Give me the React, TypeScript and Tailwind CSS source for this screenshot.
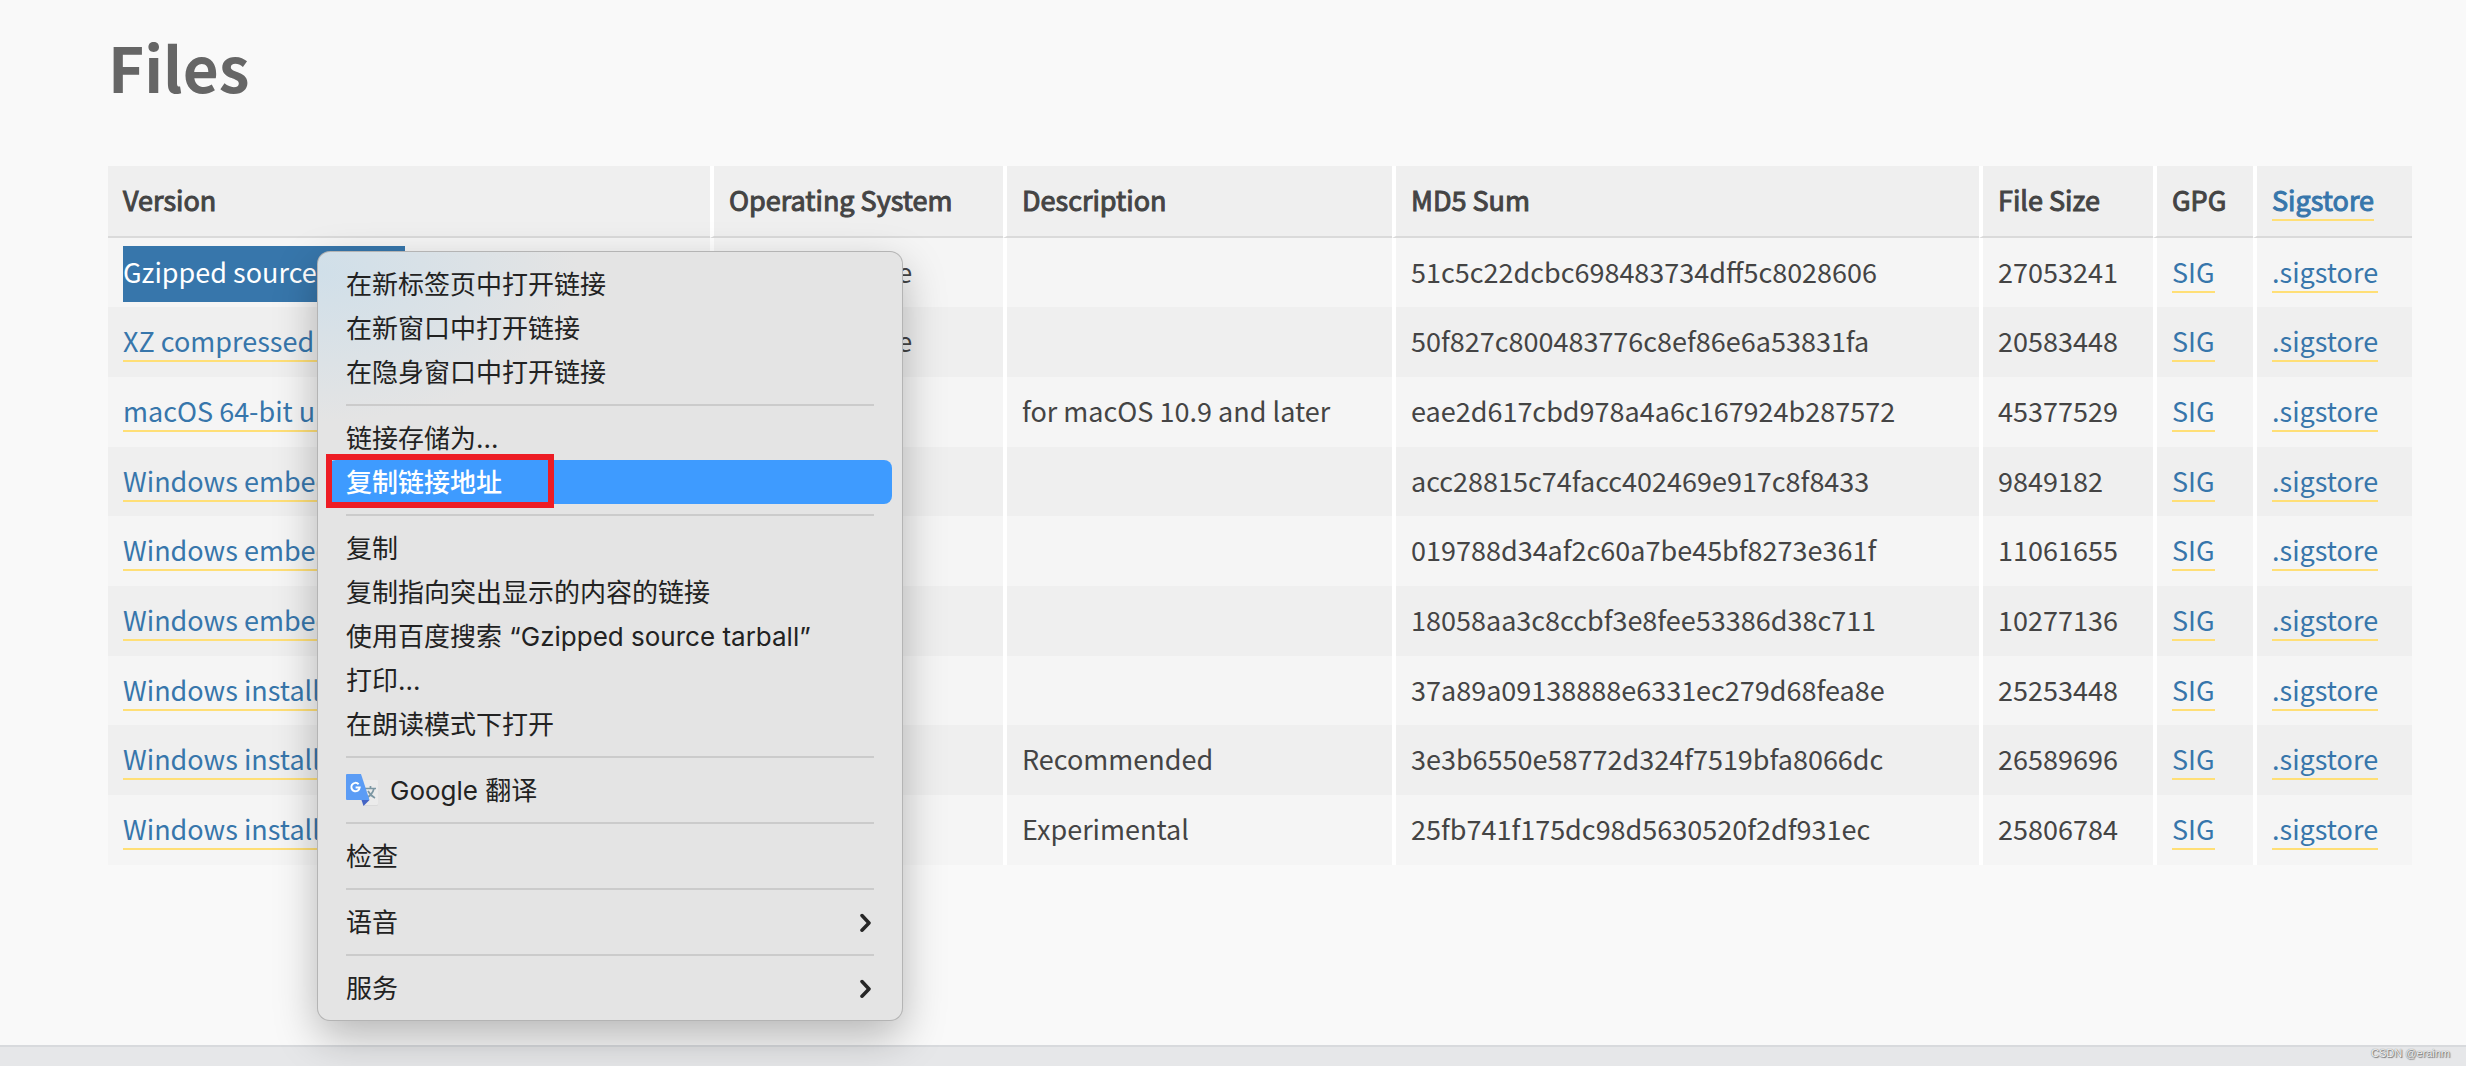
import { Fragment, type ReactNode } from "react";

type FileRow = {
  name: string;
  os: string;
  description: string;
  md5: string;
  size: string;
  selected?: boolean;
};

const files: FileRow[] = [
  { name: "Gzipped source tarball", os: "Source release", description: "", md5: "51c5c22dcbc698483734dff5c8028606", size: "27053241", selected: true },
  { name: "XZ compressed source tarball", os: "Source release", description: "", md5: "50f827c800483776c8ef86e6a53831fa", size: "20583448" },
  { name: "macOS 64-bit universal2 installer", os: "macOS", description: "for macOS 10.9 and later", md5: "eae2d617cbd978a4a6c167924b287572", size: "45377529" },
  { name: "Windows embeddable package (32-bit)", os: "Windows", description: "", md5: "acc28815c74facc402469e917c8f8433", size: "9849182" },
  { name: "Windows embeddable package (64-bit)", os: "Windows", description: "", md5: "019788d34af2c60a7be45bf8273e361f", size: "11061655" },
  { name: "Windows embeddable package (ARM64)", os: "Windows", description: "", md5: "18058aa3c8ccbf3e8fee53386d38c711", size: "10277136" },
  { name: "Windows installer (32-bit)", os: "Windows", description: "", md5: "37a89a09138888e6331ec279d68fea8e", size: "25253448" },
  { name: "Windows installer (64-bit)", os: "Windows", description: "Recommended", md5: "3e3b6550e58772d324f7519bfa8066dc", size: "26589696" },
  { name: "Windows installer (ARM64)", os: "Windows", description: "Experimental", md5: "25fb741f175dc98d5630520f2df931ec", size: "25806784" },
];

type Item = { label: string; icon?: boolean; active?: boolean; submenu?: boolean };

const menuGroups: Item[][] = [
  [{ label: "在新标签页中打开链接" }, { label: "在新窗口中打开链接" }, { label: "在隐身窗口中打开链接" }],
  [{ label: "链接存储为..." }, { label: "复制链接地址", active: true }],
  [
    { label: "复制" },
    { label: "复制指向突出显示的内容的链接" },
    { label: "使用百度搜索 “Gzipped source tarball”" },
    { label: "打印..." },
    { label: "在朗读模式下打开" },
  ],
  [{ label: "Google 翻译", icon: true }],
  [{ label: "检查" }],
  [{ label: "语音", submenu: true }],
  [{ label: "服务", submenu: true }],
];

function FileLink({ children, selected = false }: { children: ReactNode; selected?: boolean }) {
  return (
    <a
      href="#"
      className={
        selected
          ? "bg-[#3776ab] pt-[6px] pb-[11px] text-white"
          : "border-b-2 border-[#ffdf76] text-[#3776ab]"
      }
    >
      {children}
    </a>
  );
}

function FilesTable() {
  const th = "border-b-2 border-[#dadada] px-[15px] pt-[14px] align-top font-normal [-webkit-text-stroke:1px_currentColor]";
  const td = "px-[15px] pt-[14px] align-top";
  const divider = " border-l-4 border-l-white";
  return (
    <table className="w-full table-fixed border-separate border-spacing-0 text-left text-[27px] leading-10 whitespace-nowrap text-[#444]">
      <colgroup>
        <col />
        <col className="w-[293px]" />
        <col className="w-[389px]" />
        <col className="w-[587px]" />
        <col className="w-[174px]" />
        <col className="w-[100px]" />
        <col className="w-[159px]" />
      </colgroup>
      <thead>
        <tr className="h-[72px] bg-[#efefef]">
          <th className={th}>Version</th>
          <th className={th + divider}>Operating System</th>
          <th className={th + divider}>Description</th>
          <th className={th + divider}>MD5 Sum</th>
          <th className={th + divider}>File Size</th>
          <th className={th + divider}>GPG</th>
          <th className={th + divider}>
            <FileLink>Sigstore</FileLink>
          </th>
        </tr>
      </thead>
      <tbody>
        {files.map((f) => (
          <tr key={f.md5} className="h-[70px] bg-[#f5f5f5] even:bg-[#efefef] nth-[3n+1]:h-[69px]">
            <td className={td}>
              <FileLink selected={f.selected}>{f.name}</FileLink>
            </td>
            <td className={td + divider}>{f.os}</td>
            <td className={td + divider}>{f.description}</td>
            <td className={td + divider}>{f.md5}</td>
            <td className={td + divider}>{f.size}</td>
            <td className={td + divider}>
              <FileLink>SIG</FileLink>
            </td>
            <td className={td + divider}>
              <FileLink>.sigstore</FileLink>
            </td>
          </tr>
        ))}
      </tbody>
    </table>
  );
}

function TranslateIcon() {
  return (
    <svg viewBox="0 0 32 32" className="mr-3 size-8" aria-hidden="true">
      <path d="M14 6h17a1 1 0 0 1 1 1v23a1 1 0 0 1-1 1H17z" fill="#ebebeb" />
      <path d="M17 31h14a1 1 0 0 0 1-1v.6a1 1 0 0 1-1 1H17z" fill="#cfcfcf" />
      <path d="M19 14.5h11M24.5 12v2.5M28 14.5c-1 4-4 7.500-7.500 9.500M22 17c1.500 3 4 5.500 7 7" fill="none" stroke="#7c97a3" strokeWidth="1.700" />
      <path d="M15.500 26h8l-6 6z" fill="#4464c4" />
      <path d="M1 0h14l8.500 26H1a1 1 0 0 1-1-1V1a1 1 0 0 1 1-1z" fill="#5b9cf5" />
      <path d="M12.600 10.200a4.200 4.200 0 1 0 1.100 3.300H9.600" fill="none" stroke="#fff" strokeWidth="2" />
    </svg>
  );
}

function Chevron() {
  return (
    <svg viewBox="0 0 14 20" className="ml-auto h-5 w-[14px]" fill="none" stroke="#262626" strokeWidth="3.500" strokeLinecap="round" strokeLinejoin="round" aria-hidden="true">
      <path d="M2 3.500l7 7.500L2 18.200" />
    </svg>
  );
}

function ContextMenu() {
  return (
    <div
      role="menu"
      className="absolute top-[252px] left-[318px] w-[584px] rounded-[12px] bg-[#e4e4e4] bg-[radial-gradient(ellipse_260px_150px_at_0_20px,#d0dfe9,#e4e4e4)] p-[10px] text-[26px] text-[#222] shadow-[0_0_0_1px_#b4b4b4,0_16px_44px_rgba(0,0,0,0.28)]"
    >
      {menuGroups.map((group, i) => (
        <Fragment key={i}>
          {i > 0 && <hr className="mx-[18px] my-[10px] border-0 border-t-2 border-[#cbcbcb]" />}
          {group.map((item) => (
            <button
              key={item.label}
              type="button"
              role="menuitem"
              className={
                item.active
                  ? "relative flex h-11 w-full items-center rounded-[8px] bg-[#3e9bff] px-[18px] font-medium text-white"
                  : "flex h-11 w-full items-center px-[18px]"
              }
            >
              {item.icon && <TranslateIcon />}
              {item.label}
              {item.submenu && <Chevron />}
              {item.active && <span className="absolute -top-[6px] -left-[2px] h-[54px] w-[228px] border-6 border-[#ed1c24]" />}
            </button>
          ))}
        </Fragment>
      ))}
    </div>
  );
}

export default function App() {
  return (
    <div className="relative flex min-h-screen flex-col overflow-hidden bg-[#f9f9f9] font-['Noto_Sans_CJK_SC',sans-serif]">
      <main className="flex-1 pr-[54px] pl-[108px]">
        <h1 className="pt-[22px] pb-14 text-[62px] leading-[88px] font-bold text-[#666]">Files</h1>
        <FilesTable />
      </main>
      <footer className="h-[21px] border-t-2 border-[#d8dadd] bg-[#e6e7e9] pr-4 text-right font-['Liberation_Sans',sans-serif] text-[11px] leading-3 text-[#f4f4f4] [text-shadow:0_0_1px_#555,1px_1px_1px_#777]">
        CSDN @erainm
      </footer>
      <div className="font-['Inter','Noto_Sans_CJK_SC',sans-serif]">
        <ContextMenu />
      </div>
    </div>
  );
}
